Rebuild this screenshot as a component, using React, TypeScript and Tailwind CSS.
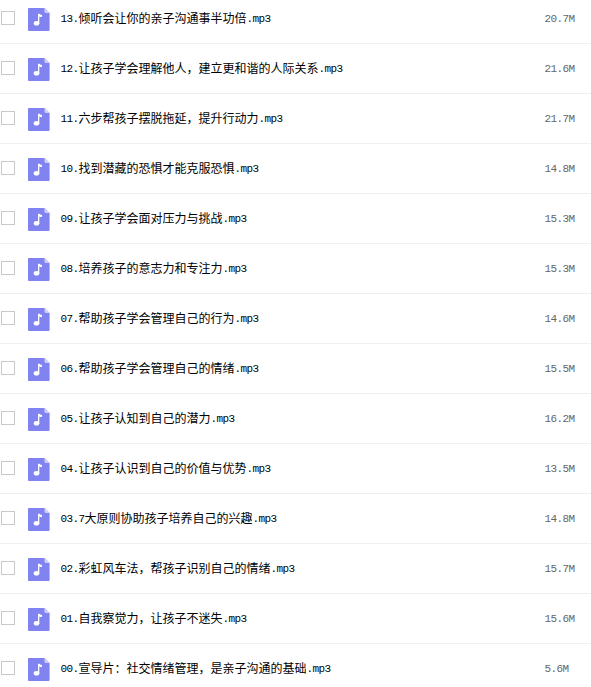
type AudioFile = {
  prefix: string;
  title: string;
  size: string;
};

const files: AudioFile[] = [
  { prefix: "13.", title: "倾听会让你的亲子沟通事半功倍", size: "20.7M" },
  { prefix: "12.", title: "让孩子学会理解他人，建立更和谐的人际关系", size: "21.6M" },
  { prefix: "11.", title: "六步帮孩子摆脱拖延，提升行动力", size: "21.7M" },
  { prefix: "10.", title: "找到潜藏的恐惧才能克服恐惧", size: "14.8M" },
  { prefix: "09.", title: "让孩子学会面对压力与挑战", size: "15.3M" },
  { prefix: "08.", title: "培养孩子的意志力和专注力", size: "15.3M" },
  { prefix: "07.", title: "帮助孩子学会管理自己的行为", size: "14.6M" },
  { prefix: "06.", title: "帮助孩子学会管理自己的情绪", size: "15.5M" },
  { prefix: "05.", title: "让孩子认知到自己的潜力", size: "16.2M" },
  { prefix: "04.", title: "让孩子认识到自己的价值与优势", size: "13.5M" },
  { prefix: "03.7", title: "大原则协助孩子培养自己的兴趣", size: "14.8M" },
  { prefix: "02.", title: "彩虹风车法，帮孩子识别自己的情绪", size: "15.7M" },
  { prefix: "01.", title: "自我察觉力，让孩子不迷失", size: "15.6M" },
  { prefix: "00.", title: "宣导片：社交情绪管理，是亲子沟通的基础", size: "5.6M" },
];

function MusicFileIcon() {
  return (
    <svg width="22" height="23" viewBox="0 0 22 23" className="mt-[14px] ml-[13px] shrink-0">
      <path d="M1 0H16.5L21.6 5V22Q21.6 23 20.6 23H1Q0 23 0 22V1Q0 0 1 0Z" fill="#8183f1" />
      <path d="M16.5 0L21.6 5H18Q16.5 5 16.5 3.5Z" fill="#cfd0fa" />
      <ellipse cx="8.5" cy="15.3" rx="2.8" ry="2.3" fill="#fff" />
      <path d="M10 5.7H11.3Q11.8 6.8 14 7V8.9Q12.2 8.9 11.3 8.4V15.4H10Z" fill="#fff" />
    </svg>
  );
}

function FileRow({ file }: { file: AudioFile }) {
  return (
    <li className="flex h-[50px] items-start border-b border-[#f0f0f1]">
      <span
        role="checkbox"
        aria-checked="false"
        aria-label={file.title}
        className="mt-[17px] ml-px size-[14px] shrink-0 border border-[#c5c7c8] bg-white"
      />
      <MusicFileIcon />
      <div className="mt-[15px] ml-[10.5px] flex flex-1 items-start text-xs leading-5 whitespace-nowrap text-black">
        <span className="text-[11px] leading-5 tracking-[-0.6px]">{file.prefix}</span>
        <span className="pt-px">{file.title}</span>
        <span className="text-[11px] leading-5 tracking-[-0.6px]">.mp3</span>
      </div>
      {/* 文件大小 */}
      <span className="mt-[15px] w-[46.5px] shrink-0 text-[11px] leading-5 tracking-[-0.6px] text-[#666]">
        {file.size}
      </span>
    </li>
  );
}

export default function App() {
  return (
    <main className="h-[687px] w-[591px] overflow-hidden bg-white font-['Liberation_Mono','Noto_Sans_CJK_SC',monospace]">
      {/* 列表顶部已滚动出可视区域 */}
      <ul className="-mt-1.5">
        {files.map((file) => (
          <FileRow key={file.prefix} file={file} />
        ))}
      </ul>
    </main>
  );
}
